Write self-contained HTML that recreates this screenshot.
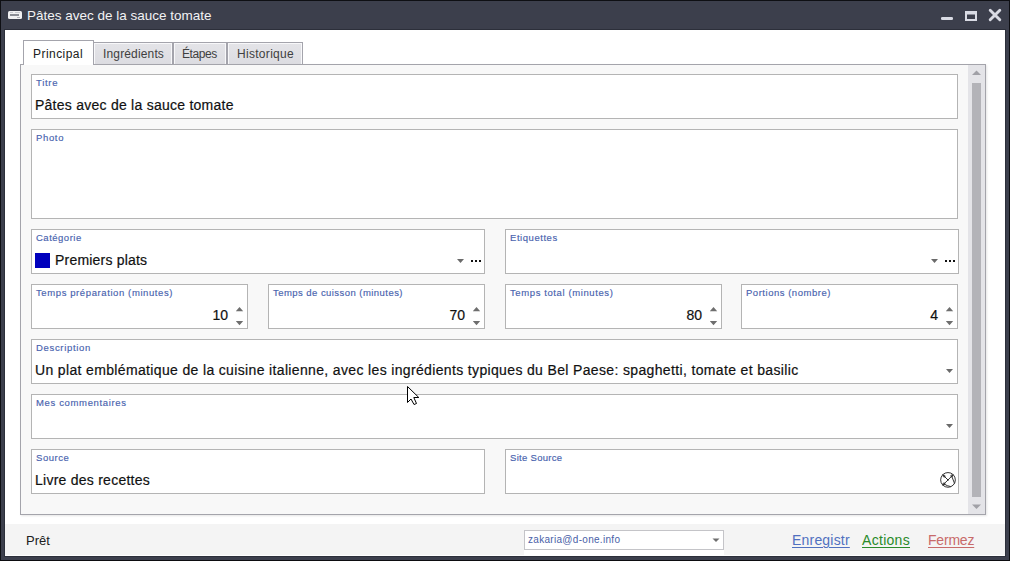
<!DOCTYPE html>
<html><head><meta charset="utf-8">
<style>
*{margin:0;padding:0;box-sizing:border-box}
html,body{width:1010px;height:561px;overflow:hidden;background:#3c3f4c;font-family:"Liberation Sans",sans-serif}
div,span,svg{position:absolute}
#frame{left:0;top:0;width:1010px;height:561px;border:1px solid #0e0f13;border-bottom:1px solid #0c0c10}
#ticon{left:8px;top:11px;width:14px;height:8px;background:#f0f0f2;border-radius:1.5px}
#ticon i{position:absolute;left:2px;top:3px;width:9px;height:2px;background:#8a8c94}
#title{left:27px;top:9px;color:#f2f2f4;font-size:13.5px;line-height:14px;white-space:nowrap}
#client{left:5px;top:30px;width:1000px;height:526px;background:#fff;box-shadow:0 0 0 1px #2c2f3a}
.tab{top:42px;height:23px;border:1px solid #a4a4ac;border-bottom:none;background:linear-gradient(#e4e4e8,#dcdce1);box-shadow:inset 1px 1px 0 #f8f8fa,inset -1px -1px 0 #f8f8fa;color:#404040;font-size:12px;line-height:12px;white-space:nowrap}
.tab span{top:5px}
.tab.act{top:40px;height:25px;background:#fff;box-shadow:none;color:#202020;z-index:2}
.tab.act span{top:7px}
#panel{left:20px;top:64px;width:966px;height:451px;background:#f8f8f8;border:1px solid #a4a4ab;box-shadow:1px 1px 2px rgba(0,0,0,0.10)}
.fld{background:#fff;border:1px solid #b4b4b4}
.lbl{left:4px;top:2.5px;font-size:9.5px;line-height:10px;letter-spacing:0.6px;color:#4862ae;white-space:nowrap;-webkit-text-stroke:0.15px #4862ae}
.val{left:3px;top:23px;font-size:14px;line-height:14px;color:#111;white-space:nowrap;-webkit-text-stroke:0.2px #111}
.num{right:19px;top:23px;font-size:14px;line-height:14px;color:#111;-webkit-text-stroke:0.2px #111}
.spin{right:1px;top:22px;width:10px;height:20px}
.dd{width:8px;height:5px}
.dots{width:12px;height:3px}
#scroll{left:968px;top:65px;width:17px;height:449px;background:#e4e4e8}
#thumb{left:4px;top:18px;width:9px;height:414px;background:#b3b3b8}
#status{left:5px;top:524px;width:1000px;height:31px;background:#f4f4f4}
#pret{left:26px;top:534px;font-size:13px;line-height:13px;color:#202020}
#combo{left:524px;top:530px;width:200px;height:20px;background:#fff;border:1px solid #c4c4c8}
#combo span{left:3px;top:4px;font-size:10px;line-height:10px;letter-spacing:0.3px;color:#4a5fa8;white-space:nowrap}
.lnk{top:533px;font-size:14px;line-height:14px;text-decoration:underline;text-underline-offset:1.5px;text-decoration-thickness:1px;white-space:nowrap}
</style></head><body>
<div id="frame"></div>
<div id="ticon"><i></i><i style="left:2px;top:1px;width:3px;height:1px;background:#c8c9cf"></i><i style="left:7px;top:1px;width:5px;height:1px;background:#c8c9cf"></i><i style="left:9px;top:6px;width:3px;height:1px;background:#b0b1b8"></i></div>
<div id="title">Pâtes avec de la sauce tomate</div>
<svg style="left:940px;top:16px" width="15" height="5"><rect x="1" y="1" width="12" height="3" rx="1.3" fill="#d9dbe4"/></svg>
<svg style="left:964px;top:10px" width="15" height="13"><path fill="#d9dbe4" fill-rule="evenodd" d="M1 1 H13 V11 H1 Z M3 4.5 V9 H11 V4.5 Z"/></svg>
<svg style="left:988px;top:8px" width="15" height="15"><path d="M2.2 2.2 L11.8 11.8 M11.8 2.2 L2.2 11.8" stroke="#d9dbe4" stroke-width="2.9" stroke-linecap="round"/></svg>
<div id="client"></div>
<div class="tab act" style="left:23px;width:71px"><span style="left:9px;letter-spacing:0.45px">Principal</span></div>
<div class="tab" style="left:93px;width:80px"><span style="left:9px;letter-spacing:0.15px">Ingrédients</span></div>
<div class="tab" style="left:173px;width:54px"><span style="left:8px;letter-spacing:-0.4px">Étapes</span></div>
<div class="tab" style="left:227px;width:76px"><span style="left:9px;letter-spacing:0.3px">Historique</span></div>
<div id="panel"></div>
<div id="scroll">
 <svg style="left:4px;top:5px" width="9" height="6"><path d="M0 5 L4.5 0.5 L9 5 Z" fill="#a0a0a6"/></svg>
 <div id="thumb"></div>
 <svg style="left:4px;top:439px" width="9" height="6"><path d="M0 0.5 L4.5 5 L9 0.5 Z" fill="#a0a0a6"/></svg>
</div>
<div class="fld" style="left:31px;top:74px;width:927px;height:45px"><div class="lbl" style="letter-spacing:0.7px">Titre</div><div class="val" style="letter-spacing:0.25px">Pâtes avec de la sauce tomate</div></div>
<div class="fld" style="left:31px;top:129px;width:927px;height:90px"><div class="lbl" style="letter-spacing:0.65px">Photo</div></div>
<div class="fld" style="left:31px;top:229px;width:454px;height:45px"><div class="lbl" style="letter-spacing:0.5px">Catégorie</div>
 <div style="left:3px;top:23px;width:15px;height:15px;background:#0000bd"></div>
 <div class="val" style="left:23px;letter-spacing:0.2px">Premiers plats</div>
 <svg class="dd" style="left:425px;top:29px"><path d="M0 0 L7 0 L3.5 4 Z" fill="#6a6a6a"/></svg>
 <svg class="dots" style="left:439px;top:30px"><rect x="0" y="0" width="2" height="2" fill="#111"/><rect x="4" y="0" width="2" height="2" fill="#111"/><rect x="8" y="0" width="2" height="2" fill="#111"/></svg>
</div>
<div class="fld" style="left:505px;top:229px;width:454px;height:45px"><div class="lbl" style="letter-spacing:0.55px">Etiquettes</div>
 <svg class="dd" style="left:425px;top:29px"><path d="M0 0 L7 0 L3.5 4 Z" fill="#6a6a6a"/></svg>
 <svg class="dots" style="left:439px;top:30px"><rect x="0" y="0" width="2" height="2" fill="#111"/><rect x="4" y="0" width="2" height="2" fill="#111"/><rect x="8" y="0" width="2" height="2" fill="#111"/></svg>
</div>
<div class="fld" style="left:31px;top:284px;width:217px;height:45px"><div class="lbl" style="letter-spacing:0.6px">Temps préparation (minutes)</div><div class="num">10</div>
 <svg class="spin"><path d="M-0.2 4.3 L3.5 0 L7.2 4.3 Z M-0.2 14 L7.2 14 L3.5 18.3 Z" fill="#6e6e6e"/></svg></div>
<div class="fld" style="left:268px;top:284px;width:217px;height:45px"><div class="lbl" style="letter-spacing:0.45px">Temps de cuisson (minutes)</div><div class="num">70</div>
 <svg class="spin"><path d="M-0.2 4.3 L3.5 0 L7.2 4.3 Z M-0.2 14 L7.2 14 L3.5 18.3 Z" fill="#6e6e6e"/></svg></div>
<div class="fld" style="left:505px;top:284px;width:217px;height:45px"><div class="lbl" style="letter-spacing:0.6px">Temps total (minutes)</div><div class="num">80</div>
 <svg class="spin"><path d="M-0.2 4.3 L3.5 0 L7.2 4.3 Z M-0.2 14 L7.2 14 L3.5 18.3 Z" fill="#6e6e6e"/></svg></div>
<div class="fld" style="left:741px;top:284px;width:217px;height:45px"><div class="lbl" style="letter-spacing:0.52px">Portions (nombre)</div><div class="num">4</div>
 <svg class="spin"><path d="M-0.2 4.3 L3.5 0 L7.2 4.3 Z M-0.2 14 L7.2 14 L3.5 18.3 Z" fill="#6e6e6e"/></svg></div>
<div class="fld" style="left:31px;top:339px;width:927px;height:45px"><div class="lbl" style="letter-spacing:0.67px">Description</div><div class="val" style="letter-spacing:0.35px">Un plat emblématique de la cuisine italienne, avec les ingrédients typiques du Bel Paese: spaghetti, tomate et basilic</div>
 <svg class="dd" style="left:914px;top:29px"><path d="M0 0 L7 0 L3.5 4 Z" fill="#6a6a6a"/></svg></div>
<div class="fld" style="left:31px;top:394px;width:927px;height:45px"><div class="lbl" style="letter-spacing:0.65px">Mes commentaires</div>
 <svg class="dd" style="left:914px;top:29px"><path d="M0 0 L7 0 L3.5 4 Z" fill="#6a6a6a"/></svg></div>
<div class="fld" style="left:31px;top:449px;width:454px;height:45px"><div class="lbl" style="letter-spacing:0.55px">Source</div><div class="val" style="letter-spacing:0.25px">Livre des recettes</div></div>
<div class="fld" style="left:505px;top:449px;width:454px;height:45px"><div class="lbl" style="letter-spacing:0.3px">Site Source</div>
 <svg style="left:432px;top:20px" width="20" height="20" viewBox="0 0 20 20"><g fill="none" stroke="#2a2a2a" stroke-width="0.95"><circle cx="10" cy="9.9" r="7.35"/><path d="M4.4 4.4 L10 10 L15.4 4.4 M10 10 L4.4 15.4 M13.6 5.9 L16.6 13.6 M6 13.9 Q9 16 12.8 16.6"/><circle cx="6.2" cy="6.2" r="0.9"/><circle cx="13.7" cy="5.9" r="0.9"/><circle cx="6" cy="13.8" r="0.9"/></g><circle cx="10" cy="10" r="0.8" fill="#222"/></svg>
</div>
<div id="status"></div>
<div id="pret">Prêt</div>
<div id="combo"><span>zakaria@d-one.info</span>
 <svg style="left:187px;top:7px" width="9" height="5"><path d="M0.5 0.5 L7.5 0.5 L4 4 Z" fill="#6e6e6e"/></svg></div>
<div style="left:524px;top:550px;width:200px;height:5px;background:#fff"></div>
<div class="lnk" style="left:792px;color:#5070c0;letter-spacing:0.2px">Enregistr</div>
<div class="lnk" style="left:862px;color:#2a8a2a;letter-spacing:0.3px">Actions</div>
<div class="lnk" style="left:928px;color:#c86a6a;letter-spacing:-0.2px">Fermez</div>
<svg style="left:406px;top:385px" width="14" height="21" viewBox="0 0 14 21"><path d="M1.5 1.5 L1.5 17.5 L5 14 L8 19.5 L10.5 18.5 L7.8 12.5 L12.8 12.5 Z" fill="#fff" stroke="#000" stroke-width="1" stroke-linejoin="miter"/></svg>
</body></html>
